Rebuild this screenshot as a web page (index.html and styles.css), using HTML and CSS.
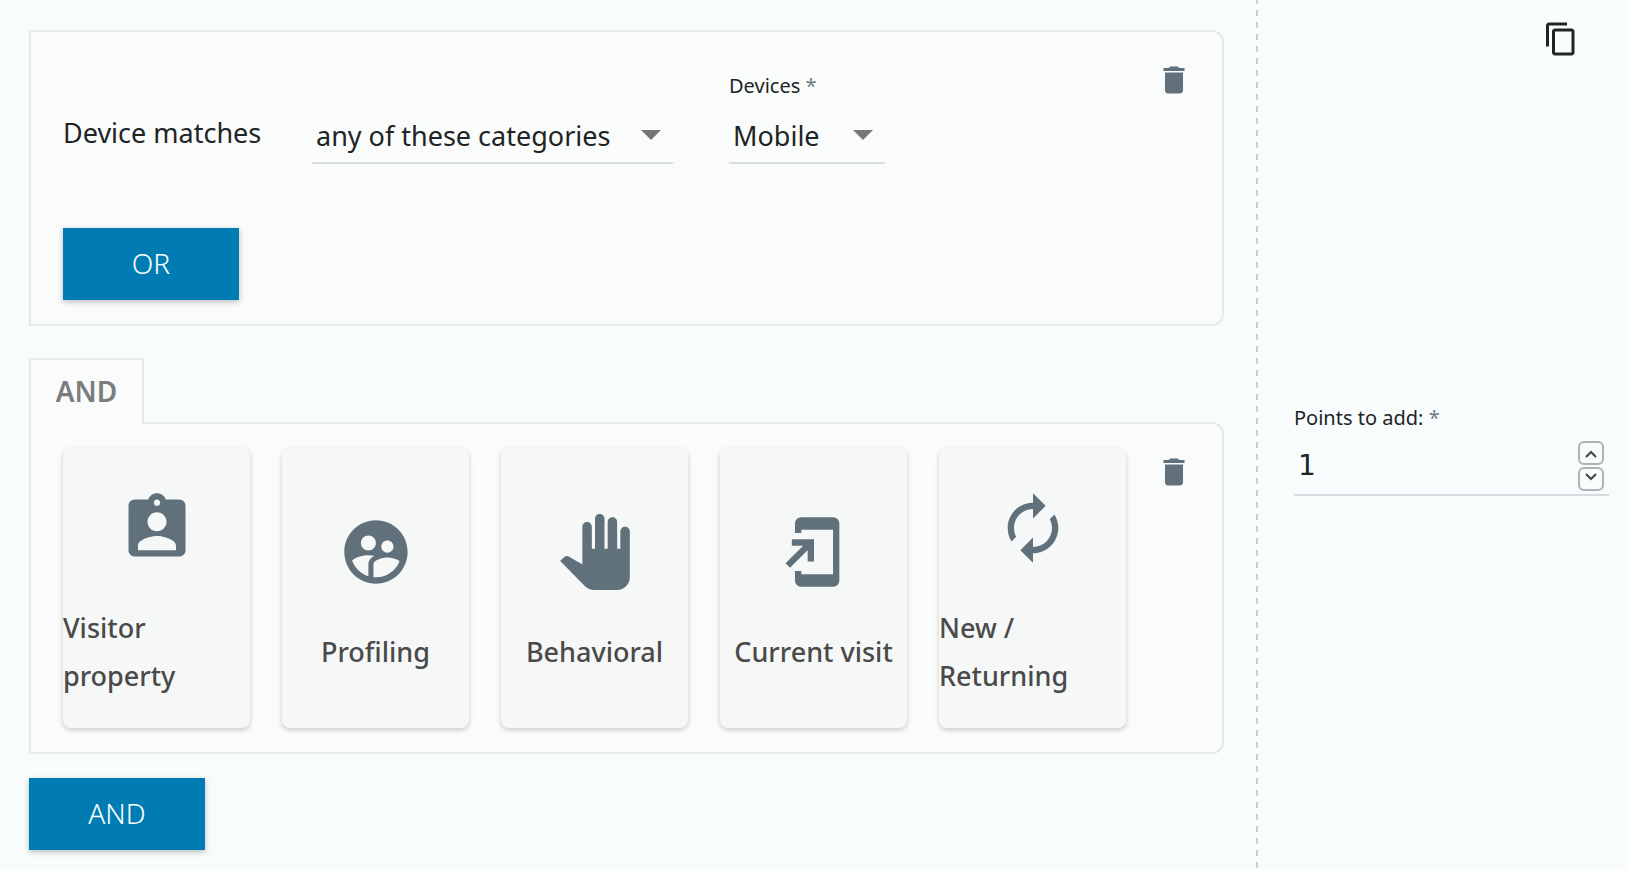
FILE: index.html
```html
<!DOCTYPE html>
<html lang="en">
<head>
<meta charset="utf-8">
<meta name="viewport" content="width=device-width, initial-scale=1">
<title>Scoring rule</title>
<link rel="stylesheet" href="styles.css">
</head>
<body>
<div class="page">
  <main class="conditions">
    <section class="group group--first">
      <div class="group-main">
        <div class="criteria">
          <label class="criteria-label" for="match-mode">Device matches</label>
          <div class="select-box select-box--wide">
            <select id="match-mode" class="select">
              <option>any of these categories</option>
              <option>none of these categories</option>
            </select>
            <svg class="caret" viewBox="0 0 20 10" aria-hidden="true"><path d="M0 0h20L10 10z"/></svg>
          </div>
          <div class="field">
            <label class="field-label" for="devices">Devices <span class="required">*</span></label>
            <div class="select-box">
              <select id="devices" class="select">
                <option>Mobile</option>
                <option>Tablet</option>
              </select>
              <svg class="caret" viewBox="0 0 20 10" aria-hidden="true"><path d="M0 0h20L10 10z"/></svg>
            </div>
          </div>
        </div>
        <button type="button" class="button">OR</button>
      </div>
      <button type="button" class="icon-button" aria-label="Delete condition">
        <svg class="icon" viewBox="0 0 24 24" aria-hidden="true"><path d="M6 19c0 1.100.9 2 2 2h8c1.100 0 2-.9 2-2V7H6v12zM19 4h-3.500l-1-1h-5l-1 1H5v2h14V4z"/></svg>
      </button>
    </section>

    <div class="joined">
      <div class="tab">AND</div>
      <section class="group group--types">
        <div class="types">
          <button type="button" class="type">
            <svg class="type-icon" viewBox="0 0 24 24" aria-hidden="true"><path d="M19 3h-4.180C14.400 1.840 13.300 1 12 1c-1.300 0-2.400.84-2.820 2H5c-1.100 0-2 .9-2 2v14c0 1.100.9 2 2 2h14c1.100 0 2-.9 2-2V5c0-1.100-.9-2-2-2zm-7 0c.55 0 1 .45 1 1s-.45 1-1 1-1-.45-1-1 .45-1 1-1zm0 4c1.660 0 3 1.340 3 3s-1.340 3-3 3-3-1.340-3-3 1.340-3 3-3zm6 12H6v-1.400c0-2 4-3.100 6-3.100s6 1.100 6 3.100V19z"/></svg>
            <span>Visitor property</span>
          </button>
          <button type="button" class="type">
            <svg class="type-icon" viewBox="0 0 24 24" aria-hidden="true"><path d="M11.990 2c-5.520 0-10 4.480-10 10s4.480 10 10 10 10-4.480 10-10-4.480-10-10-10zm3.610 6.340c1.070 0 1.930.86 1.930 1.930 0 1.070-.86 1.930-1.930 1.930-1.070 0-1.930-.86-1.930-1.930-.01-1.070.86-1.930 1.930-1.930zm-6-1.580c1.300 0 2.360 1.060 2.360 2.360 0 1.300-1.060 2.360-2.360 2.360s-2.360-1.060-2.360-2.360c0-1.310 1.050-2.360 2.360-2.360zm0 9.130v3.750c-2.400-.75-4.300-2.600-5.140-4.960 1.050-1.120 3.670-1.690 5.140-1.690.53 0 1.200.08 1.900.22-1.640.87-1.900 2.020-1.900 2.680zM11.990 20c-.27 0-.53-.01-.79-.04v-4.070c0-1.420 2.940-2.130 4.400-2.130 1.070 0 2.920.39 3.840 1.150-1.170 2.970-4.060 5.090-7.450 5.090z"/></svg>
            <span>Profiling</span>
          </button>
          <button type="button" class="type">
            <svg class="type-icon" viewBox="0 0 24 24" aria-hidden="true"><path d="M23 5.500V20c0 2.200-1.800 4-4 4h-7.300c-1.080 0-2.100-.43-2.850-1.190L1 14.830s1.260-1.230 1.300-1.250c.22-.19.49-.29.79-.29.22 0 .42.06.6.16.04.01 4.310 2.460 4.310 2.460V4c0-.83.67-1.500 1.500-1.500S11 3.170 11 4v7h1V1.500c0-.83.67-1.500 1.500-1.500S15 .67 15 1.500V11h1V2.500c0-.83.67-1.500 1.500-1.500s1.500.67 1.500 1.500V11h1V5.500c0-.83.67-1.500 1.500-1.500s1.500.67 1.500 1.500z"/></svg>
            <span>Behavioral</span>
          </button>
          <button type="button" class="type">
            <svg class="type-icon" viewBox="0 0 24 24" aria-hidden="true"><path d="M18 1.010L8 1c-1.100 0-2 .9-2 2v3h2V5h10v14H8v-1H6v3c0 1.100.9 2 2 2h10c1.100 0 2-.9 2-2V3c0-1.100-.9-1.990-2-1.990zM10 15h2V8H5v2h3.590L3 15.590 4.410 17 10 11.410z"/></svg>
            <span>Current visit</span>
          </button>
          <button type="button" class="type">
            <svg class="type-icon" viewBox="0 0 24 24" aria-hidden="true"><path d="M12 6v3l4-4-4-4v3c-4.420 0-8 3.580-8 8 0 1.570.46 3.030 1.240 4.260L6.700 14.800c-.45-.83-.7-1.790-.7-2.800 0-3.310 2.690-6 6-6zm6.760 1.740L17.300 9.200c.44.84.7 1.790.7 2.800 0 3.310-2.690 6-6 6v-3l-4 4 4 4v-3c4.420 0 8-3.580 8-8 0-1.570-.46-3.030-1.240-4.260z"/></svg>
            <span>New / Returning</span>
          </button>
        </div>
        <button type="button" class="icon-button" aria-label="Delete condition">
          <svg class="icon" viewBox="0 0 24 24" aria-hidden="true"><path d="M6 19c0 1.100.9 2 2 2h8c1.100 0 2-.9 2-2V7H6v12zM19 4h-3.500l-1-1h-5l-1 1H5v2h14V4z"/></svg>
        </button>
      </section>
    </div>

    <button type="button" class="button">AND</button>
  </main>

  <aside class="scoring">
    <button type="button" class="icon-button icon-button--copy" aria-label="Duplicate rule">
      <svg class="icon icon--copy" viewBox="0 0 24 24" aria-hidden="true"><path d="M16 1H4c-1.100 0-2 .9-2 2v14h2V3h12V1zm3 4H8c-1.100 0-2 .9-2 2v14c0 1.100.9 2 2 2h11c1.100 0 2-.9 2-2V7c0-1.100-.9-2-2-2zm0 16H8V7h11v14z"/></svg>
    </button>
    <div class="points">
      <label class="field-label" for="points">Points to add: <span class="required">*</span></label>
      <div class="points-box">
        <input id="points" class="points-input" type="text" inputmode="numeric" value="1">
        <div class="stepper">
          <button type="button" class="step" aria-label="Increase">
            <svg class="step-icon" viewBox="0 0 12 8" aria-hidden="true"><path d="M1 7l5-5 5 5"/></svg>
          </button>
          <button type="button" class="step step--down" aria-label="Decrease">
            <svg class="step-icon" viewBox="0 0 12 8" aria-hidden="true"><path d="M1 1l5 5 5-5"/></svg>
          </button>
        </div>
      </div>
    </div>
  </aside>
</div>
</body>
</html>
```

FILE: styles.css
```css
* {
  box-sizing: border-box;
}

body {
  margin: 0;
  background: #fff;
  color: #212425;
  font: 27px/48px "Noto Sans", "Open Sans", sans-serif;
}

button,
select,
input {
  margin: 0;
  padding: 0;
  border: 0;
  border-radius: 0;
  background: none;
  color: inherit;
  font: inherit;
}

.page {
  display: flex;
  min-height: 100vh;
  margin-right: 3px;
  background: #f8fcfd;
}

.conditions {
  flex: 1;
  min-width: 0;
  padding: 30px 32px 20px 29px;
}

.group {
  display: flex;
  justify-content: space-between;
  align-items: flex-start;
  padding: 24px 30px 24px 32px;
  border: 2px solid #e7eaea;
  border-radius: 0 12px 12px 0;
  background: #fafcfb;
}

.group--first {
  padding-top: 30px;
}

.criteria {
  display: flex;
  align-items: flex-end;
  gap: 56px;
  margin-bottom: 64px;
}

.criteria-label {
  width: 193px;
  padding-bottom: 7px;
  white-space: nowrap;
}

.field-label {
  display: block;
  font-size: 20px;
  line-height: 48px;
  white-space: nowrap;
}

.required {
  color: #6c7a80;
}

.select-box {
  position: relative;
  width: 156px;
  border-bottom: 2px solid #dadddd;
}

.select-box--wide {
  width: 361px;
}

.select {
  display: block;
  width: 100%;
  height: 52px;
  padding: 0 32px 0 4px;
  appearance: none;
}

.caret {
  position: absolute;
  top: 20px;
  right: 12px;
  width: 20px;
  height: 10px;
  fill: #747776;
  pointer-events: none;
}

.button {
  display: block;
  width: 176px;
  height: 72px;
  padding-bottom: 2px;
  background: #007cb2;
  box-shadow: 0 2px 6px rgba(0, 0, 0, 0.25);
  color: #fff;
  font-size: 28px;
  font-weight: 300;
}

.icon-button {
  display: flex;
}

.icon {
  width: 36px;
  height: 36px;
  fill: #61717b;
}

.icon--copy {
  fill: #212425;
}

.joined {
  margin: 32px 0 24px;
}

.tab {
  position: relative;
  width: 115px;
  height: 66px;
  margin-bottom: -2px;
  padding-top: 7px;
  border: 2px solid #e7eaea;
  border-bottom: 0;
  background: #fafcfb;
  color: #7b7d7d;
  font-size: 28px;
  font-weight: 600;
  text-align: center;
}

.group--types .icon-button {
  margin-top: 6px;
}

.types {
  display: grid;
  grid-template-columns: repeat(5, 187px);
  gap: 32px;
}

.type {
  display: flex;
  flex-direction: column;
  align-items: center;
  justify-content: center;
  gap: 38px;
  height: 280px;
  padding-top: 13px;
  border-radius: 8px;
  background: #f6f8f7;
  box-shadow: 0 2px 5px rgba(0, 0, 0, 0.2);
  color: #4a4a4a;
  font-weight: 500;
  text-align: left;
}

.type-icon {
  flex: none;
  width: 76px;
  height: 76px;
  fill: #61717b;
}

.scoring {
  display: flex;
  flex-direction: column;
  width: 373px;
  padding: 21px 20px 0 38px;
  background: repeating-linear-gradient(#cdd0d2 0 4px, transparent 4px 10px, #cdd0d2 10px 12px) left top / 2px 12px repeat-y;
}

.icon-button--copy {
  align-self: flex-end;
  margin-right: 30px;
}

.points {
  margin-top: 337px;
}

.points-box {
  display: flex;
  justify-content: space-between;
  align-items: center;
  height: 54px;
  padding: 0 5px 4px 0;
  border-bottom: 2px solid #d9dcde;
}

.points-input {
  flex: 1;
  min-width: 0;
  padding-left: 4px;
  font: 28px/48px "DejaVu Sans", sans-serif;
}

.stepper {
  display: grid;
  gap: 2px;
}

.step {
  display: flex;
  align-items: center;
  justify-content: center;
  width: 26px;
  height: 24px;
  padding-top: 2px;
  border: 2px solid #b0b2b3;
  border-radius: 6px;
}

.step--down {
  padding: 0 0 4px;
}

.step-icon {
  width: 12px;
  height: 8px;
  fill: none;
  stroke: #444;
  stroke-width: 2;
}
```
